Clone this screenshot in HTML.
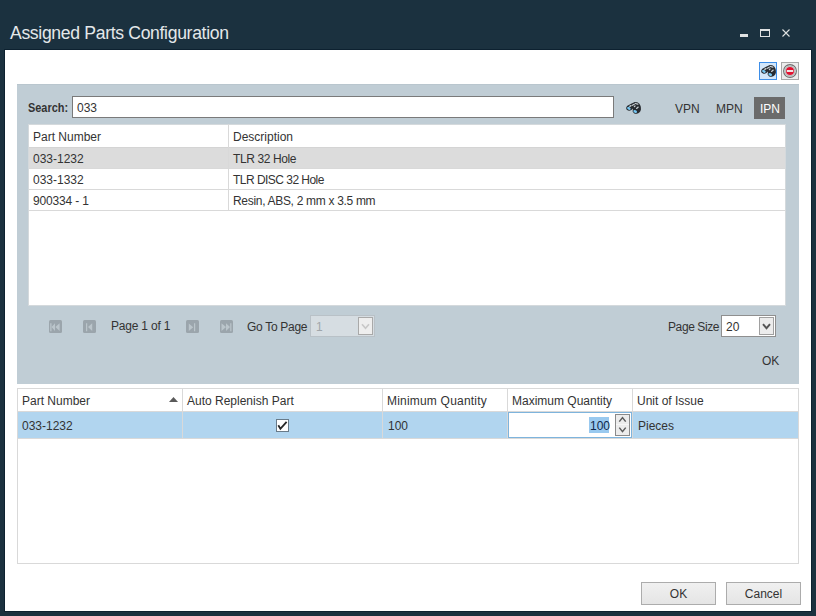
<!DOCTYPE html>
<html><head><meta charset="utf-8">
<style>
*{margin:0;padding:0;box-sizing:border-box}
html,body{width:816px;height:616px;overflow:hidden;background:#1b313f;font-family:"Liberation Sans",sans-serif;color:#333}
.a{position:absolute}
.t{position:absolute;font-size:12px;line-height:14px;white-space:nowrap}
#title{left:10px;top:23px;font-size:17.6px;line-height:20px;color:#e4e8ea;letter-spacing:-0.33px}
#dlg{left:4px;top:49px;width:808px;height:563px;background:#fff;border:1px solid #0d2130}
#panel{left:17px;top:84px;width:782px;height:300px;background:#c0cdd5;border-top:1px solid #b9c6ce}
.grid{background:#fff}
.hl{position:absolute;height:1px;background:#d9d9d9}
.vl{position:absolute;width:1px;background:#d9d9d9}
.pg{position:absolute;width:13px;height:13px;background:#9ba6ad;border-radius:2px}
.btn{position:absolute;width:75px;height:23px;border:1px solid #acacac;background:linear-gradient(#f0f0f0,#e5e5e5);text-align:center;font-size:12px;line-height:22px}
</style></head><body>
<div id="title" class="a">Assigned Parts Configuration</div>
<!-- window buttons -->
<div class="a" style="left:740px;top:34px;width:8px;height:2.5px;background:#dfe1e2"></div>
<div class="a" style="left:760px;top:29px;width:10px;height:8px;border:1px solid #dfe1e2;border-top-width:2px"></div>
<svg class="a" style="left:781px;top:28px" width="10" height="10" viewBox="0 0 10 10"><path d="M1.5 1.5L8.5 8.5M8.5 1.5L1.5 8.5" stroke="#dfe1e2" stroke-width="1.1"/></svg>

<div id="dlg" class="a"></div>

<!-- top right icon buttons -->
<div class="a" style="left:759px;top:62px;width:18px;height:18px;border:1px solid #3d8ee8;background:#d3e7fa"></div>
<div class="a" style="left:781px;top:62px;width:18px;height:18px;border:1px solid #a8a8a8;background:#ececec"></div>
<svg class="a" style="left:757px;top:61px" width="24" height="20" viewBox="0 0 24 20">
<path d="M4.2 9.8C4.6 8.5 5.2 7.6 5.9 7.4L9.1 5.7L12.8 4.1L15.2 4.2C16.3 4.6 17 5 17.4 5.7L18.6 8.1C18.9 9.3 19 10.6 18.9 11.8C18.6 12.9 18.2 13.6 17.6 14.2C16.8 15 15.8 15.6 14.7 15.7C13.6 15.8 12.6 15.6 12 15.2L10.6 13.5L11 10.6L9.4 12C8.3 12.6 7.6 12.8 6.9 12.7C5.9 12.6 5.1 12.3 4.7 11.8C4.3 11.2 4.1 10.5 4.2 9.8Z" fill="#272b30"/>
<path d="M7.8 8.4L9 7.6M10.5 7.2L12.2 6.3M13.4 5.5L15.8 6.2M14.6 10.4L16.2 9.1M12.4 8.6L13 8" stroke="#c9cfd3" stroke-width="1.3" stroke-linecap="round"/>
<ellipse cx="6.9" cy="10.4" rx="1.9" ry="1.3" transform="rotate(30 6.9 10.4)" fill="#76c8f4"/>
<ellipse cx="13.2" cy="13.5" rx="1.9" ry="1.25" transform="rotate(20 13.2 13.5)" fill="#76c8f4"/>
</svg>
<svg class="a" style="left:781px;top:62px" width="18" height="18" viewBox="0 0 18 18">
<circle cx="9" cy="9" r="6.4" fill="none" stroke="#6f6f6f" stroke-width="1.1"/>
<circle cx="9" cy="9" r="4.9" fill="none" stroke="#a0a0a0" stroke-width="0.9"/>
<circle cx="9" cy="9" r="4" fill="#e2102f"/>
<rect x="5.8" y="8.1" width="6.4" height="1.8" fill="#f4fbf8"/>
</svg>

<div id="panel" class="a"></div>
<svg class="a" style="left:622px;top:98px" width="24" height="20" viewBox="0 0 24 20">
<path d="M4.2 9.8C4.6 8.5 5.2 7.6 5.9 7.4L9.1 5.7L12.8 4.1L15.2 4.2C16.3 4.6 17 5 17.4 5.7L18.6 8.1C18.9 9.3 19 10.6 18.9 11.8C18.6 12.9 18.2 13.6 17.6 14.2C16.8 15 15.8 15.6 14.7 15.7C13.6 15.8 12.6 15.6 12 15.2L10.6 13.5L11 10.6L9.4 12C8.3 12.6 7.6 12.8 6.9 12.7C5.9 12.6 5.1 12.3 4.7 11.8C4.3 11.2 4.1 10.5 4.2 9.8Z" fill="#272b30"/>
<path d="M7.8 8.4L9 7.6M10.5 7.2L12.2 6.3M13.4 5.5L15.8 6.2M14.6 10.4L16.2 9.1M12.4 8.6L13 8" stroke="#c9cfd3" stroke-width="1.3" stroke-linecap="round"/>
<ellipse cx="6.9" cy="10.4" rx="1.9" ry="1.3" transform="rotate(30 6.9 10.4)" fill="#76c8f4"/>
<ellipse cx="13.2" cy="13.5" rx="1.9" ry="1.25" transform="rotate(20 13.2 13.5)" fill="#76c8f4"/>
</svg>
<div class="t" style="left:28px;top:101px;font-weight:bold;transform:scaleX(0.91);transform-origin:0 0">Search:</div>
<div class="a" style="left:72px;top:96px;width:542px;height:22px;background:#fff;border:1px solid #7a7a7a"></div>
<div class="t" style="left:77px;top:101px">033</div>

<div class="t" style="left:675px;top:102px">VPN</div>
<div class="t" style="left:716px;top:102px">MPN</div>
<div class="a" style="left:754px;top:97px;width:31px;height:22px;background:#6b6b6b"></div>
<div class="t" style="left:760px;top:102px;color:#fff">IPN</div>

<!-- upper grid -->
<div class="a grid" style="left:28px;top:124px;width:758px;height:182px;border:1px solid #d4d9dc"></div>
<div class="a" style="left:29px;top:147px;width:756px;height:21px;background:#dcdcdc"></div>
<div class="hl" style="left:29px;top:147px;width:756px;background:#d4d4d4"></div>
<div class="hl" style="left:29px;top:168px;width:756px"></div>
<div class="hl" style="left:29px;top:189px;width:756px"></div>
<div class="hl" style="left:29px;top:210px;width:756px"></div>
<div class="vl" style="left:228px;top:124px;height:87px"></div>
<div class="t" style="left:33px;top:130px">Part Number</div>
<div class="t" style="left:233px;top:130px">Description</div>
<div class="t" style="left:33px;top:152px">033-1232</div>
<div class="t" style="left:233px;top:152px;letter-spacing:-0.4px">TLR 32 Hole</div>
<div class="t" style="left:33px;top:173px">033-1332</div>
<div class="t" style="left:233px;top:173px;letter-spacing:-0.53px">TLR DISC 32 Hole</div>
<div class="t" style="left:33px;top:194px;letter-spacing:-0.15px">900334 - 1</div>
<div class="t" style="left:233px;top:194px;letter-spacing:-0.31px">Resin, ABS, 2 mm x 3.5 mm</div>

<!-- pager -->
<svg class="a" style="left:49px;top:320px" width="13" height="13"><rect width="13" height="13" rx="1.5" fill="#9ba5ac"/><path d="M1.2 3.2h1.3v8h-1.3zM2.6 7.1L6 3.2V11zM6.4 7.1L10.6 3.2V11z" fill="#bbc5cb"/></svg>
<svg class="a" style="left:83px;top:320px" width="13" height="13"><rect width="13" height="13" rx="1.5" fill="#9ba5ac"/><path d="M3 3.2h1.2v8H3zM5 7.1L9.2 3.2V11z" fill="#bbc5cb"/></svg>
<svg class="a" style="left:186px;top:320px" width="13" height="13"><rect width="13" height="13" rx="1.5" fill="#9ba5ac"/><path d="M2.8 3.5L7.2 7.2L2.8 11zM8 3.2h1.2v8H8z" fill="#bbc5cb"/></svg>
<svg class="a" style="left:220px;top:320px" width="13" height="13"><rect width="13" height="13" rx="1.5" fill="#9ba5ac"/><path d="M1.5 3.3L6 7.1L1.5 11zM6 3.3L10 7.1L6 11zM10.2 3.2h1.2v8h-1.2z" fill="#bbc5cb"/></svg>
<div class="t" style="left:111px;top:319px;letter-spacing:-0.2px">Page 1 of 1</div>
<div class="t" style="left:247px;top:320px;letter-spacing:-0.3px">Go To Page</div>
<div class="a" style="left:310px;top:315px;width:65px;height:22px;background:#d6dde2;border:1px solid #b9c1c7"></div>
<div class="t" style="left:316px;top:320px;color:#a0a6aa">1</div>
<div class="a" style="left:358px;top:317px;width:15px;height:18px;background:#eeeeee;border:1px solid #a9a9a9"></div>
<svg class="a" style="left:358px;top:317px" width="15" height="18"><path d="M4 7.2L7.5 11.2L11 7.2" fill="none" stroke="#c8c8c8" stroke-width="1.7"/></svg>

<div class="t" style="left:668px;top:320px;letter-spacing:-0.4px">Page Size</div>
<div class="a" style="left:721px;top:315px;width:55px;height:22px;background:#fff;border:1px solid #8f8f8f"></div>
<div class="t" style="left:726px;top:320px">20</div>
<div class="a" style="left:759px;top:317px;width:15px;height:18px;background:#ececec;border:1px solid #a0a0a0"></div>
<svg class="a" style="left:759px;top:317px" width="15" height="18"><path d="M4 7.2L7.5 11.2L11 7.2" fill="none" stroke="#555" stroke-width="1.9"/></svg>
<div class="t" style="left:762px;top:354px">OK</div>

<!-- lower grid -->
<div class="a" style="left:17px;top:388px;width:782px;height:176px;border:1px solid #d9d9d9;background:#fff"></div>
<div class="a" style="left:18px;top:412px;width:780px;height:26px;background:#b1d5ef"></div>
<div class="hl" style="left:18px;top:411px;width:780px"></div>
<div class="hl" style="left:18px;top:438px;width:780px"></div>
<div class="vl" style="left:182px;top:389px;height:49px"></div>
<div class="vl" style="left:382px;top:389px;height:49px"></div>
<div class="vl" style="left:507px;top:389px;height:49px"></div>
<div class="vl" style="left:632px;top:389px;height:49px"></div>
<div class="t" style="left:22px;top:394px">Part Number</div>
<svg class="a" style="left:168px;top:396px" width="11" height="7"><path d="M1 6L5.5 1L10 6Z" fill="#5a5a5a"/></svg>
<div class="t" style="left:187px;top:394px">Auto Replenish Part</div>
<div class="t" style="left:387px;top:394px;letter-spacing:0.2px">Minimum Quantity</div>
<div class="t" style="left:512px;top:394px">Maximum Quantity</div>
<div class="t" style="left:637px;top:394px">Unit of Issue</div>
<div class="t" style="left:22px;top:419px">033-1232</div>
<div class="a" style="left:276px;top:419px;width:13px;height:13px;border:1px solid #687a88;background:#fff"></div>
<svg class="a" style="left:276px;top:419px" width="13" height="13"><path d="M2.3 6.3L4.4 9.8L10.6 2.8" fill="none" stroke="#262626" stroke-width="1.8"/></svg>
<div class="t" style="left:388px;top:419px">100</div>
<div class="a" style="left:508px;top:412px;width:124px;height:26px;border:1px solid #7eb4dd;background:#fff"></div>
<div class="a" style="left:589px;top:417px;width:20px;height:16px;background:#99c9ef"></div>
<div class="t" style="left:590px;top:419px;color:#10284a">100</div>
<div class="a" style="left:615px;top:414px;width:15px;height:22px;border:1px solid #8a8a8a;background:#ececec"></div>
<svg class="a" style="left:615px;top:414px" width="15" height="22"><path d="M1 10.5H14" stroke="#f6f6f6" stroke-width="1"/><path d="M4.3 7.6L7.5 3.6L10.7 7.6M4.3 13.6L7.5 17.6L10.7 13.6" fill="none" stroke="#5a5a5a" stroke-width="1.5"/></svg>
<div class="t" style="left:638px;top:419px">Pieces</div>

<div class="btn" style="left:641px;top:582px">OK</div>
<div class="btn" style="left:726px;top:582px">Cancel</div>
</body></html>
